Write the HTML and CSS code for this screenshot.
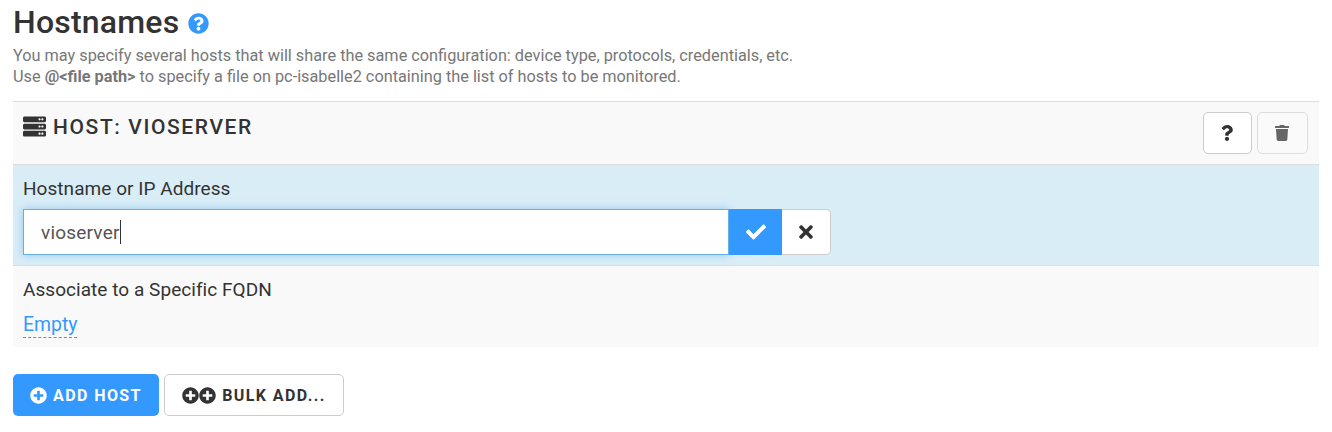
FILE: index.html
```html
<!DOCTYPE html>
<html lang="en">
<head>
    <meta charset="UTF-8">
    <meta name="viewport" content="width=device-width, initial-scale=1.0">
    <title>Hostnames</title>
    <link rel="stylesheet" href="styles.css">
</head>
<body>
    <h1 class="page-title">Hostnames
        <svg class="title-help" viewBox="0 0 512 512"><path d="M504 256c0 136.997-111.043 248-248 248S8 392.997 8 256C8 119.083 119.043 8 256 8s248 111.083 248 248zM262.655 90c-54.497 0-89.255 22.957-116.549 63.758-3.536 5.286-2.353 12.415 2.715 16.258l34.699 26.31c5.205 3.947 12.621 3.008 16.665-2.122 17.864-22.658 30.113-35.797 57.303-35.797 20.429 0 45.698 13.148 45.698 32.958 0 14.976-12.363 22.667-32.534 33.976C247.128 238.528 216 254.941 216 296v4c0 6.627 5.373 12 12 12h56c6.627 0 12-5.373 12-12v-1.333c0-28.462 83.186-29.647 83.186-106.667 0-58.002-60.165-102-116.531-102zM256 338c-25.365 0-46 20.635-46 46 0 25.364 20.635 46 46 46s46-20.636 46-46c0-25.365-20.635-46-46-46z"/></svg>
    </h1>
    <p class="intro">You may specify several hosts that will share the same configuration: device type, protocols, credentials, etc.<br>
    Use <b>@&lt;file path&gt;</b> to specify a file on pc-isabelle2 containing the list of hosts to be monitored.</p>

    <div class="host-panel">
        <div class="host-header">
            <h2 class="host-title">
                <svg class="server-icon" viewBox="0 0 512 512"><path d="M480 160H32c-17.673 0-32-14.327-32-32V64c0-17.673 14.327-32 32-32h448c17.673 0 32 14.327 32 32v64c0 17.673-14.327 32-32 32zm-48-88c-13.255 0-24 10.745-24 24s10.745 24 24 24 24-10.745 24-24-10.745-24-24-24zm-64 0c-13.255 0-24 10.745-24 24s10.745 24 24 24 24-10.745 24-24-10.745-24-24-24zm112 248H32c-17.673 0-32-14.327-32-32v-64c0-17.673 14.327-32 32-32h448c17.673 0 32 14.327 32 32v64c0 17.673-14.327 32-32 32zm-48-88c-13.255 0-24 10.745-24 24s10.745 24 24 24 24-10.745 24-24-10.745-24-24-24zm-64 0c-13.255 0-24 10.745-24 24s10.745 24 24 24 24-10.745 24-24-10.745-24-24-24zm112 248H32c-17.673 0-32-14.327-32-32v-64c0-17.673 14.327-32 32-32h448c17.673 0 32 14.327 32 32v64c0 17.673-14.327 32-32 32zm-48-88c-13.255 0-24 10.745-24 24s10.745 24 24 24 24-10.745 24-24-10.745-24-24-24zm-64 0c-13.255 0-24 10.745-24 24s10.745 24 24 24 24-10.745 24-24-10.745-24-24-24z"/></svg>
                HOST: VIOSERVER
            </h2>
            <div class="host-actions">
                <button class="icon-btn help-btn"><svg class="help-icon" viewBox="0 0 384 512"><path d="M202.021 0C122.202 0 70.503 32.703 29.914 91.026c-7.363 10.58-5.093 25.086 5.178 32.874l43.138 32.709c10.373 7.865 25.132 6.026 33.253-4.148 25.049-31.381 43.63-49.449 82.757-49.449 30.764 0 68.816 19.799 68.816 49.631 0 22.552-18.617 34.134-48.993 51.164-35.423 19.86-82.299 44.576-82.299 106.405V320c0 13.255 10.745 24 24 24h72.471c13.255 0 24-10.745 24-24v-5.773c0-42.86 125.268-44.645 125.268-160.627C377.504 66.256 286.902 0 202.021 0zM192 373.459c-38.196 0-69.271 31.075-69.271 69.271 0 38.195 31.075 69.27 69.271 69.27s69.271-31.075 69.271-69.271-31.075-69.27-69.271-69.27z"/></svg></button>
                <button class="icon-btn delete-btn"><svg class="trash-icon" viewBox="0 0 448 512"><path d="M432 32H312l-9.4-18.7A24 24 0 0 0 281.1 0H166.8a23.72 23.72 0 0 0-21.4 13.3L136 32H16A16 16 0 0 0 0 48v32a16 16 0 0 0 16 16h416a16 16 0 0 0 16-16V48a16 16 0 0 0-16-16zM53.2 467a48 48 0 0 0 47.9 45h245.8a48 48 0 0 0 47.9-45L416 128H32z"/></svg></button>
            </div>
        </div>

        <div class="field-row editing">
            <div class="field-label">Hostname or IP Address</div>
            <div class="input-group">
                <div class="text-input">vioserver<span class="caret"></span></div>
                <button class="confirm-btn"><svg class="check-icon" viewBox="0 0 512 512"><path d="M173.898 439.404l-166.4-166.4c-9.997-9.997-9.997-26.206 0-36.204l36.203-36.204c9.997-9.998 26.207-9.998 36.204 0L192 312.69 432.095 72.596c9.997-9.997 26.207-9.997 36.204 0l36.203 36.204c9.997 9.997 9.997 26.206 0 36.204l-294.4 294.401c-9.998 9.997-26.207 9.997-36.204-.001z"/></svg></button>
                <button class="cancel-btn"><svg class="times-icon" viewBox="0 0 352 512"><path d="M242.72 256l100.07-100.07c12.28-12.28 12.28-32.19 0-44.48l-22.24-22.24c-12.28-12.28-32.19-12.28-44.48 0L176 189.28 75.93 89.21c-12.28-12.28-32.19-12.28-44.48 0L9.21 111.45c-12.28 12.28-12.28 32.19 0 44.48L109.28 256 9.21 356.07c-12.28 12.28-12.28 32.19 0 44.48l22.24 22.24c12.28 12.28 32.2 12.28 44.48 0L176 322.72l100.07 100.07c12.28 12.28 32.2 12.28 44.48 0l22.24-22.24c12.28-12.28 12.28-32.19 0-44.48L242.72 256z"/></svg></button>
            </div>
        </div>

        <div class="field-row">
            <div class="field-label">Associate to a Specific FQDN</div>
            <a class="editable-link">Empty</a>
        </div>
    </div>

    <div class="page-actions">
        <button class="btn btn-primary">
            <svg class="plus-icon" viewBox="0 0 512 512"><path d="M256 8C119 8 8 119 8 256s111 248 248 248 248-111 248-248S393 8 256 8zm144 276c0 6.6-5.4 12-12 12h-92v92c0 6.6-5.4 12-12 12h-56c-6.6 0-12-5.4-12-12v-92h-92c-6.6 0-12-5.4-12-12v-56c0-6.6 5.4-12 12-12h92v-92c0-6.6 5.4-12 12-12h56c6.6 0 12 5.4 12 12v92h92c6.6 0 12 5.4 12 12v56z"/></svg>
            ADD HOST
        </button>
        <button class="btn btn-default">
            <span class="plus-pair">
                <svg class="plus-icon" viewBox="0 0 512 512"><path d="M256 8C119 8 8 119 8 256s111 248 248 248 248-111 248-248S393 8 256 8zm144 276c0 6.6-5.4 12-12 12h-92v92c0 6.6-5.4 12-12 12h-56c-6.6 0-12-5.4-12-12v-92h-92c-6.6 0-12-5.4-12-12v-56c0-6.6 5.4-12 12-12h92v-92c0-6.6 5.4-12 12-12h56c6.6 0 12 5.4 12 12v92h92c6.6 0 12 5.4 12 12v56z"/></svg>
                <svg class="plus-icon" viewBox="0 0 512 512"><path d="M256 8C119 8 8 119 8 256s111 248 248 248 248-111 248-248S393 8 256 8zm144 276c0 6.6-5.4 12-12 12h-92v92c0 6.6-5.4 12-12 12h-56c-6.6 0-12-5.4-12-12v-92h-92c-6.6 0-12-5.4-12-12v-56c0-6.6 5.4-12 12-12h92v-92c0-6.6 5.4-12 12-12h56c6.6 0 12 5.4 12 12v92h92c6.6 0 12 5.4 12 12v56z"/></svg>
            </span>
            BULK ADD...
        </button>
    </div>
</body>
</html>
```

FILE: styles.css
```css
* {
    margin: 0;
    padding: 0;
    box-sizing: border-box;
    font-family: 'Roboto', sans-serif;
}

body {
    background-color: white;
    color: #333;
    padding: 0 13px;
    height: 432px;
    overflow: hidden;
}

svg {
    fill: currentColor;
    display: block;
}

.page-title {
    display: flex;
    align-items: center;
    font-size: 32px;
    font-weight: 500;
    letter-spacing: 0.2px;
    line-height: 44px;
}

.title-help {
    width: 21px;
    height: 21px;
    margin-left: 9px;
    margin-top: 2px;
    color: #3399ff;
}

.intro {
    color: #777;
    font-size: 16.3px;
    line-height: 21px;
    margin-top: 1px;
    height: 56px;
}

.intro b {
    font-weight: 700;
    color: #777;
}

.host-panel {
    background: #f9f9f9;
    border-top: 1px solid #ddd;
}

.host-header {
    display: flex;
    justify-content: space-between;
    height: 63px;
    padding: 10px 11px 0 10px;
    border-bottom: 1px solid #ddd;
}

.host-title {
    display: flex;
    align-items: center;
    gap: 7px;
    height: 29px;
    font-size: 21px;
    font-weight: 500;
    letter-spacing: 1.6px;
}

.server-icon {
    width: 23px;
    height: 23px;
}

.host-actions {
    display: flex;
    gap: 5px;
}

.icon-btn {
    display: flex;
    align-items: center;
    justify-content: center;
    height: 42px;
    background: white;
    border: 1px solid #ccc;
    border-radius: 5px;
}

.help-btn {
    width: 49px;
    color: #333;
}

.delete-btn {
    width: 51px;
    color: #666;
    border-color: #ddd;
    background: #fafafa;
}

.help-icon {
    width: 12px;
    height: 16px;
    margin-right: 2px;
}

.trash-icon {
    width: 14px;
    height: 16px;
    margin-right: 2px;
}

.field-row {
    padding: 13px 10px 0;
    height: 81px;
}

.field-row.editing {
    background: #d9edf7;
    height: 101px;
    border-bottom: 1px solid #ddd;
}

.field-label {
    font-size: 19px;
    line-height: 22px;
    color: #333;
    letter-spacing: 0.05px;
}

.input-group {
    display: flex;
    width: 808px;
    height: 46px;
    margin-top: 9px;
}

.text-input {
    flex: 1;
    display: flex;
    align-items: center;
    padding-left: 17px;
    background: white;
    border: 1px solid #66afe9;
    box-shadow: 0 0 8px rgba(102, 175, 233, 0.6);
    font-size: 19px;
    letter-spacing: 0.2px;
    color: #555;
}

.caret {
    width: 1px;
    height: 24px;
    background: #333;
}

.confirm-btn {
    display: flex;
    align-items: center;
    justify-content: center;
    width: 53px;
    background: #3399ff;
    border: none;
    color: white;
    position: relative;
}

.check-icon {
    width: 20px;
    height: 20px;
}

.cancel-btn {
    display: flex;
    align-items: center;
    justify-content: center;
    width: 49px;
    background: white;
    border: 1px solid #ccc;
    border-left: none;
    border-radius: 0 5px 5px 0;
    color: #333;
}

.times-icon {
    width: 14px;
    height: 20px;
}

.editable-link {
    display: inline-block;
    margin-top: 11px;
    font-size: 19.4px;
    line-height: 25px;
    color: #3399ff;
    border-bottom: 1px dashed #3399ff;
}

.page-actions {
    display: flex;
    gap: 5px;
    margin-top: 27px;
}

.btn {
    display: flex;
    align-items: center;
    justify-content: center;
    gap: 6px;
    height: 42px;
    border-radius: 5px;
    font-size: 16px;
    font-weight: 700;
    letter-spacing: 1.4px;
}

.btn-primary {
    width: 146px;
    background: #3399ff;
    border: none;
    color: white;
}

.btn-default {
    width: 180px;
    background: white;
    border: 1px solid #ccc;
    color: #333;
}

.plus-icon {
    width: 17px;
    height: 17px;
}

.plus-pair {
    display: flex;
}
```
